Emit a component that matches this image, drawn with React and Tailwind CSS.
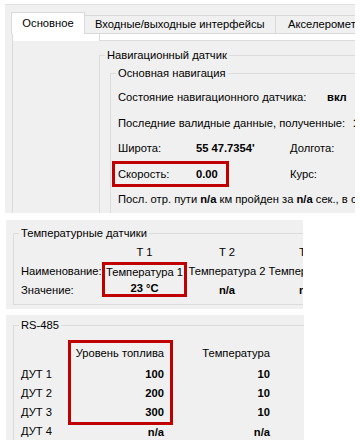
import React from "react";

function Group({ title, className = "", children }) {
  return (
    <fieldset className={`min-w-0 border border-[#dcdcdc] ${className}`}>
      <legend className="ml-[5px] px-[2px] leading-[13px]">{title}</legend>
      {children}
    </fieldset>
  );
}

function NavPanel() {
  return (
    <div className="ml-[5px] mt-[4px] w-[350px] h-[209px] bg-[#f0f0f0] border-t border-[#e2e2e2] overflow-hidden">
      {/* Tabs */}
      <div className="ml-[6px] mt-[7px] flex items-end h-[21px] whitespace-nowrap">
        <div className="relative z-10 -mb-px shrink-0 w-[74px] h-[22px] bg-white border border-b-0 border-[#d9d9d9] flex items-center justify-center">
          Основное
        </div>
        <div className="shrink-0 w-[191px] h-[18px] border-t border-r border-[#d9d9d9] pl-[10px] flex items-center">
          Входные/выходные интерфейсы
        </div>
        <div className="shrink-0 w-[100px] h-[18px] border-t border-r border-[#d9d9d9] pl-[12px] flex items-center">
          Акселерометр
        </div>
      </div>

      {/* Tab page */}
      <div className="ml-[7px] w-[400px] h-full border-l border-t border-[#d9d9d9]">
        <div className="flex h-[7px]">
          <div className="w-[86px] bg-white" />
          <div className="flex-1 bg-white border-l border-b border-[#dcdcdc]" />
        </div>

        <Group title="Навигационный датчик" className="ml-[86px] mt-[8px] w-[300px] h-[200px]">
          <Group title="Основная навигация" className="ml-[10px] mt-[5px] w-[280px] h-[180px]">
            <div className="pl-[7px] pt-[5px] whitespace-nowrap">
              <div className="h-[25.5px] flex items-center">
                <span className="w-[209px] shrink-0">Состояние навигационного датчика:</span>
                <b>вкл</b>
              </div>
              <div className="h-[25.5px] flex items-center">
                <span className="w-[235px] shrink-0">Последние валидные данные, полученные:</span>
                <b>1</b>
              </div>
              <div className="h-[25.5px] flex items-center">
                <span className="w-[78px] shrink-0">Широта:</span>
                <b className="w-[94px] shrink-0">55 47.7354'</b>
                <span>Долгота:</span>
              </div>
              <div className="h-[25.5px] flex items-center">
                <div className="-ml-[6px] shrink-0 w-[117px] h-[26px] border-[3px] border-[#c00000] pl-[3px] flex items-center">
                  <span className="w-[78px] shrink-0">Скорость:</span>
                  <b>0.00</b>
                </div>
                <span className="ml-[61px]">Курс:</span>
              </div>
              <div className="h-[25.5px] flex items-center">
                <span>
                  Посл. отр. пути <b>n/a</b> км пройден за <b>n/a</b> сек., в среднем
                </span>
              </div>
            </div>
          </Group>
        </Group>
      </div>
    </div>
  );
}

function TempPanel() {
  return (
    <div className="ml-[6px] mt-[7px] w-[297px] h-[89px] bg-[#f0f0f0] overflow-hidden">
      <Group title="Температурные датчики" className="ml-[7px] mt-[7px] w-[330px] h-[78px]">
        <div className="flex pl-[7px] pt-[3px] whitespace-nowrap">
          <div className="w-[81px] shrink-0">
            <div className="h-[19px]" />
            <div className="h-[19px] flex items-center">Наименование:</div>
            <div className="h-[19px] flex items-center">Значение:</div>
          </div>
          <div className="w-[85px] shrink-0 text-center">
            <div className="h-[19px] flex items-center justify-center">T 1</div>
            <div className="h-[35px] border-[3px] border-[#c00000]">
              <div className="h-[14px] flex items-center justify-center">Температура 1</div>
              <div className="h-[15px] pt-[2px] leading-[15px] font-bold">23 °C</div>
            </div>
          </div>
          <div className="w-[80px] shrink-0 text-center">
            <div className="h-[19px] flex items-center justify-center">T 2</div>
            <div className="h-[19px] flex items-center justify-center">Температура 2</div>
            <div className="h-[19px] flex items-center justify-center font-bold">n/a</div>
          </div>
          <div className="w-[80px] shrink-0 text-center">
            <div className="h-[19px] flex items-center justify-center">T 3</div>
            <div className="h-[19px] flex items-center justify-center">Температура 3</div>
            <div className="h-[19px] flex items-center justify-center font-bold">n/a</div>
          </div>
        </div>
      </Group>
    </div>
  );
}

const FUEL = [
  { name: "ДУТ 1", level: "100", temp: "10", h: "h-[20px]" },
  { name: "ДУТ 2", level: "200", temp: "10", h: "h-[19px]" },
  { name: "ДУТ 3", level: "300", temp: "10", h: "h-[19px]" },
];

function RsPanel() {
  return (
    <div className="ml-[6px] mt-[6px] w-[298px] h-[200px] bg-[#f0f0f0] overflow-hidden">
      <Group title="RS-485" className="ml-[7px] mt-[4px] w-[330px] h-[190px]">
        <div className="flex pl-[7px] pt-[8px] whitespace-nowrap">
          <div className="w-[47px] shrink-0">
            <div className="h-[24px]" />
            {FUEL.map((r) => (
              <div key={r.name} className={`${r.h} flex items-center`}>
                {r.name}
              </div>
            ))}
            <div className="h-[19px] flex items-center">ДУТ 4</div>
          </div>
          <div className="w-[105px] shrink-0 text-right">
            <div className="border-[3px] border-[#c00000] pr-[6px]">
              <div className="h-[21px] flex items-center justify-end">Уровень топлива</div>
              {FUEL.map((r) => (
                <div key={r.name} className={`${r.h} flex items-center justify-end font-bold`}>
                  {r.level}
                </div>
              ))}
            </div>
            <div className="h-[14px] pr-[9px] leading-[14px] font-bold">n/a</div>
          </div>
          <div className="w-[97px] shrink-0 text-right">
            <div className="h-[3px]" />
            <div className="h-[21px] flex items-center justify-end">Температура</div>
            {FUEL.map((r) => (
              <div key={r.name} className={`${r.h} flex items-center justify-end font-bold`}>
                {r.temp}
              </div>
            ))}
            <div className="h-[3px]" />
            <div className="h-[14px] leading-[14px] font-bold">n/a</div>
          </div>
        </div>
      </Group>
    </div>
  );
}

export default function App() {
  return (
    <div className="w-[360px] h-[440px] bg-white overflow-hidden text-[11.2px] text-black font-['Liberation_Sans',Arial,sans-serif]">
      <NavPanel />
      <TempPanel />
      <RsPanel />
    </div>
  );
}
